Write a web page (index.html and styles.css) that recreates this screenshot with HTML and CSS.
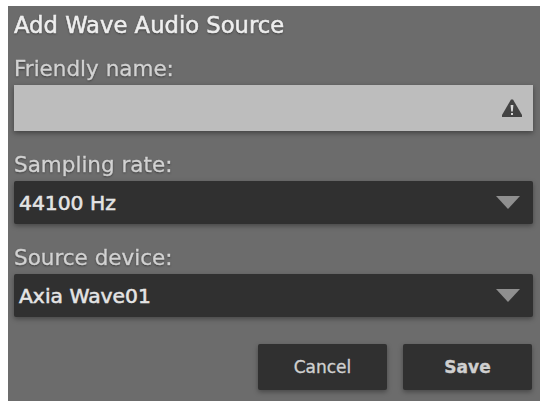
FILE: index.html
```html
<!DOCTYPE html>
<html lang="en">
<head>
<meta charset="utf-8">
<title>Add Wave Audio Source</title>
<link rel="stylesheet" href="styles.css">
</head>
<body>
<form class="dialog">
  <h1 class="dialog-title">Add Wave Audio Source</h1>
  <div class="field">
    <label class="field-label">Friendly name:</label>
    <div class="text-input">
      <svg class="warn-icon" width="20" height="18" viewBox="0 0 20 18" aria-hidden="true">
        <path class="warn-shape" d="M9 0.5 L11 0.5 L20 16 L20 18 L0 18 L0 16 Z"/>
        <path class="warn-mark" d="M8.6 6 L11.4 6 L10.8 12.5 L9.2 12.5 Z"/>
        <rect class="warn-mark" x="9" y="14" width="2" height="2"/>
      </svg>
    </div>
  </div>
  <div class="field">
    <label class="field-label">Sampling rate:</label>
    <div class="select">44100 Hz<span class="select-arrow"></span></div>
  </div>
  <div class="field">
    <label class="field-label">Source device:</label>
    <div class="select">Axia Wave01<span class="select-arrow"></span></div>
  </div>
  <div class="actions">
    <button type="button" class="btn">Cancel</button>
    <button type="button" class="btn btn-primary">Save</button>
  </div>
</form>
</body>
</html>
```
FILE: styles.css
```css
html, body {
  margin: 0;
  height: 100%;
  background: #fff;
  overflow: hidden;
}

body {
  padding: 6px 0 0 8px;
  box-sizing: border-box;
}

.dialog {
  height: 395px;
  box-sizing: border-box;
  padding: 6px 7px 0 6px;
  background: #6c6c6c;
  font-family: "DejaVu Sans", Verdana, sans-serif;
  display: flex;
  flex-direction: column;
}

.dialog-title {
  margin: 0;
  font-size: 22.7px;
  line-height: 26px;
  font-weight: 400;
  white-space: nowrap;
  color: #eeeeee;
  -webkit-text-stroke: 0.55px #eeeeee;
  text-shadow: 0 1px 2px #333;
  filter: blur(0.4px);
}

.field {
  display: flex;
  flex-direction: column;
}

.field-label {
  font-size: 21.5px;
  line-height: 24px;
  white-space: nowrap;
  color: #d2d2d2;
  -webkit-text-stroke: 0.35px #d2d2d2;
  text-shadow: 0 1px 2px #333;
  filter: blur(0.4px);
}

.dialog-title + .field {
  margin-top: 19px;
}

.field + .field {
  margin-top: 22px;
}

.text-input {
  height: 46px;
  margin-top: 4px;
  padding-right: 11px;
  background: #bdbdbd;
  display: flex;
  align-items: center;
  justify-content: flex-end;
  box-shadow: 0 2px 5px rgba(0, 0, 0, 0.4);
}

.warn-icon {
  display: block;
}

.warn-shape {
  fill: #434343;
}

.warn-mark {
  fill: #d8d8d8;
}

.select {
  position: relative;
  height: 43px;
  margin-top: 4px;
  padding-left: 5px;
  background: #303030;
  border-radius: 2px;
  color: #e4e4e4;
  font-size: 20.3px;
  line-height: 45px;
  -webkit-text-stroke: 0.55px #e4e4e4;
  box-shadow: 0 2px 5px rgba(0, 0, 0, 0.35);
}

.select-arrow {
  position: absolute;
  right: 13px;
  top: 15px;
  border-left: 12px solid transparent;
  border-right: 12px solid transparent;
  border-top: 13px solid #8f8f8f;
}

.actions {
  margin-top: 27px;
  display: flex;
  justify-content: flex-end;
  gap: 16px;
  padding-right: 1px;
}

.btn {
  width: 129px;
  height: 46px;
  border: 0;
  border-radius: 2px;
  background: #303030;
  color: #cfcfcf;
  font-family: "DejaVu Sans", Verdana, sans-serif;
  font-size: 17px;
  -webkit-text-stroke: 0.35px #cfcfcf;
  box-shadow: 0 2px 5px rgba(0, 0, 0, 0.35);
}

.btn-primary {
  font-weight: 700;
}
```
